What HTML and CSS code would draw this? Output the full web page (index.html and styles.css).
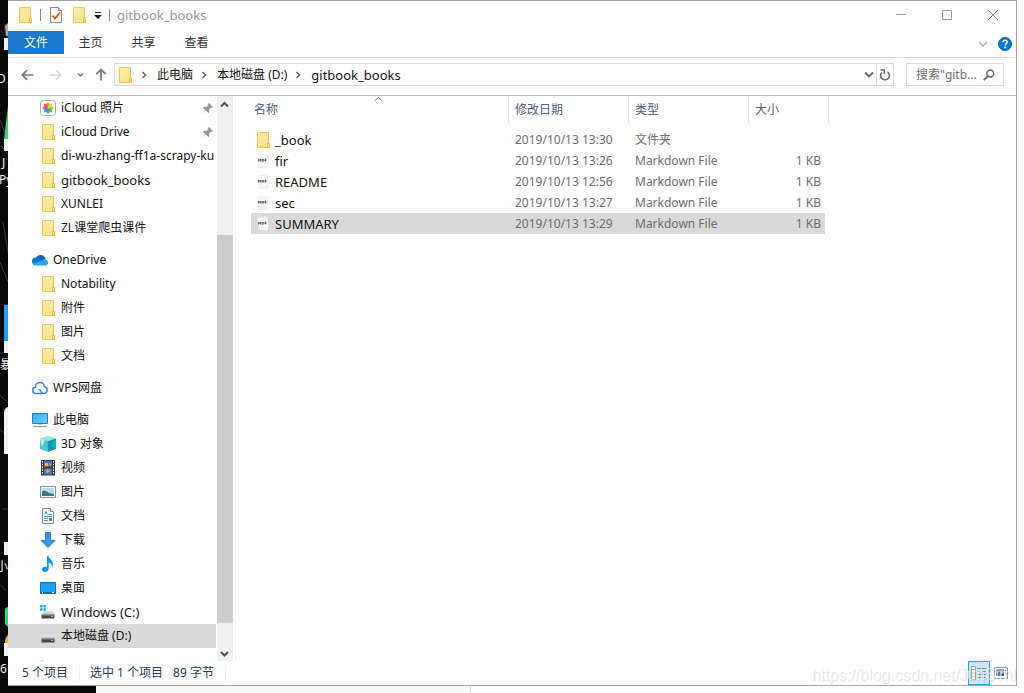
FILE: index.html
```html
<!DOCTYPE html>
<html lang="zh-CN">
<head>
<meta charset="utf-8">
<title>gitbook_books</title>
<link rel="stylesheet" href="styles.css">
</head>
<body>
<svg class="defs" width="0" height="0" aria-hidden="true">
  <defs>
    <linearGradient id="g-folder" x1="0" y1="0" x2="1" y2="1"><stop offset="0" stop-color="#ffedac"/><stop offset="1" stop-color="#ffe188"/></linearGradient>
    <linearGradient id="g-screen" x1="0" y1="0" x2="1" y2="1"><stop offset="0" stop-color="#33b1f5"/><stop offset="1" stop-color="#6ccbff"/></linearGradient>
    <linearGradient id="g-drive" x1="0" y1="0" x2="0" y2="1"><stop offset="0" stop-color="#e2e4e6"/><stop offset="1" stop-color="#c0c4c8"/></linearGradient>
    <symbol id="folder" viewBox="0 0 16 16"><path d="M2.500.5h11v11h1v4h-12z" fill="url(#g-folder)" stroke="#e9c758"/><path d="M12.500 15.500v-4.500h1.500l.5.5v4z" fill="#ffe080" stroke="#e4bf45"/></symbol>
    <symbol id="chev" viewBox="0 0 8 8"><path d="M2.500 1l3 3-3 3" fill="none" stroke="#666" stroke-width="1.500"/></symbol>
    <symbol id="pin" viewBox="0 0 12 12"><path d="M7 1l4 4-1 1-1-.3L7 7.700l.3 2.300-1 1L4 8.500.7 11.300 3.500 8 1 5.700l1-1 2.300.3L6.300 3 6 2z" fill="#8d9aa5"/></symbol>
    <symbol id="md" viewBox="0 0 16 16"><path d="M2.500 2l9-.8 1.500 1.800v11l-9.500.5z" fill="#f6f6f6" stroke="#e8e8e8" stroke-width=".6"/><path d="M3.500 8.500V6l1 1.500L5.600 6v2.500M7 6v2.500M8 6v2.500l1-1zM10.500 5.500v3M9.500 7h2.200" fill="none" stroke="#555" stroke-width=".9"/></symbol>
    <symbol id="drive" viewBox="0 0 16 16"><path d="M4 7h9l2 3.500H2z" fill="url(#g-drive)"/><path d="M1.500 10.500h13v4h-13z" fill="#45494c"/><path d="M1.500 10.500h13v1h-13z" fill="#999"/><path d="M11 12.500h2" stroke="#68e08a"/></symbol>
  </defs>
</svg>

<div class="screen">
  <svg class="desktop" viewBox="0 0 8 693" preserveAspectRatio="xMinYMin slice" aria-hidden="true">
    <rect width="8" height="693" fill="#080808"/>
    <path d="M5 24l3 4v10l-3-4zM1 30l3 6M0 120l8 20M1 145l7 10M3 222l5 30M0 262l8 20M0 395l8 8M0 430l8 5M2 509h6M1 585l5 6" stroke="#393939" stroke-width="1" fill="none"/>
    <path d="M5 26l3-3v13H6z" fill="#aaa"/>
    <path d="M8 106v34H4z" fill="#39d67b"/>
    <rect x="4" y="38" width="4" height="12" fill="#eee"/><rect x="4" y="139" width="4" height="12" fill="#eee"/>
    <rect x="4" y="305" width="4" height="36" fill="#1c9dff"/><rect x="4" y="341" width="4" height="12" fill="#eee"/>
    <path d="M8 407q-4 1-4 6v41h4z" fill="#f3f3f7"/>
    <rect x="4" y="542" width="4" height="13" fill="#eee"/>
    <path d="M8 607q-3 0-3 3v14l3 3z" fill="#1fdf75"/><path d="M8 635q-3 2-3 8h3z" fill="#ffad19"/><rect x="4" y="643" width="4" height="13" fill="#eee"/>
    <g class="desktop-text"><text x="-3" y="83">D</text><text x="2" y="167">J</text><text x="-1" y="184">Py</text><text x="0" y="369">暴</text><text x="-4" y="571">小</text><text x="0" y="673">6</text></g>
  </svg>

  <main class="window">
    <header class="titlebar">
      <svg class="ico" aria-hidden="true"><use href="#folder"/></svg>
      <span class="tsep"></span>
      <svg class="ico" viewBox="0 0 16 16" aria-hidden="true"><path d="M2.500.5h8l3 3v12h-11z" fill="#fafafa" stroke="#8b8b8b"/><path d="M10.500.5v3h3" fill="#ddd" stroke="#8b8b8b"/><path d="M4.500 8.500l2.500 3 5-6" fill="none" stroke="#e8571e" stroke-width="1.800"/></svg>
      <svg class="ico" aria-hidden="true"><use href="#folder"/></svg>
      <button class="plain" aria-label="自定义快速访问工具栏"><svg width="8" height="8" viewBox="0 0 8 8"><path d="M1 1.500h6" stroke="#222"/><path d="M0 4h8L4 8z" fill="#111"/></svg></button>
      <span class="tsep"></span>
      <h1 class="caption">gitbook_books</h1>
      <div class="winbtns">
        <button class="plain" aria-label="最小化"><svg width="12" height="12" viewBox="0 0 12 12"><path d="M1 5.500h10" stroke="#999"/></svg></button>
        <button class="plain" aria-label="最大化"><svg width="12" height="12" viewBox="0 0 12 12"><path d="M1.500 1.500h9v9h-9z" fill="none" stroke="#999"/></svg></button>
        <button class="plain" aria-label="关闭"><svg width="12" height="12" viewBox="0 0 12 12"><path d="M1 1l10 10M11 1L1 11" stroke="#8a8a8a"/></svg></button>
      </div>
    </header>

    <nav class="tabs">
      <button class="tab file">文件</button><button class="tab">主页</button><button class="tab">共享</button><button class="tab">查看</button>
      <div class="tabs-end">
        <button class="plain" aria-label="展开功能区"><svg width="10" height="8" viewBox="0 0 10 8"><path d="M1 2l4 4 4-4" fill="none" stroke="#aaa" stroke-width="1.300"/></svg></button>
        <button class="plain" aria-label="帮助"><svg width="14" height="14" viewBox="0 0 14 14"><circle cx="7" cy="7" r="6.500" fill="#0078d7" stroke="#0a5fa8"/><path d="M4.900 5.300c0-2.900 4.400-2.700 4.300-.2C9.200 6.500 7.200 6.600 7.200 8.500" fill="none" stroke="#fff" stroke-width="1.500"/><circle cx="7.200" cy="10.600" r="1" fill="#fff"/></svg></button>
      </div>
    </nav>

    <div class="addressrow">
      <div class="arrows">
        <button class="plain" aria-label="后退"><svg width="13" height="12" viewBox="0 0 13 12"><path d="M12.500 6H1.500M6 1.200L1.300 6 6 10.800" fill="none" stroke="#777" stroke-width="1.700"/></svg></button>
        <button class="plain" aria-label="前进"><svg width="13" height="12" viewBox="0 0 13 12"><path d="M.5 6h11M7 1.200L11.700 6 7 10.800" fill="none" stroke="#d8d8d8" stroke-width="1.700"/></svg></button>
        <button class="plain" aria-label="最近浏览的位置"><svg width="7" height="6" viewBox="0 0 7 6"><path d="M1 1.500L3.500 4 6 1.500" fill="none" stroke="#777" stroke-width="1.400"/></svg></button>
        <button class="plain" aria-label="上移"><svg width="12" height="13" viewBox="0 0 12 13"><path d="M6 12.500V1.500M1.200 6.200L6 1.400l4.800 4.800" fill="none" stroke="#777" stroke-width="1.700"/></svg></button>
      </div>
      <div class="address">
        <svg class="ico" aria-hidden="true"><use href="#folder"/></svg>
        <svg class="chev" aria-hidden="true"><use href="#chev"/></svg><a href="#">此电脑</a>
        <svg class="chev" aria-hidden="true"><use href="#chev"/></svg><a href="#">本地磁盘 (D:)</a>
        <svg class="chev" aria-hidden="true"><use href="#chev"/></svg><a href="#" class="latin">gitbook_books</a>
        <button class="plain drop" aria-label="历史"><svg width="10" height="8" viewBox="0 0 10 8"><path d="M1 1.500l4 4 4-4" fill="none" stroke="#666" stroke-width="1.900"/></svg></button>
        <button class="plain refresh" aria-label="刷新"><svg width="12" height="12" viewBox="0 0 12 12"><path d="M3 3.200a4.400 4.400 0 1 0 5.500-.4M1.500 1h3.800v4" fill="none" stroke="#666" stroke-width="1.500"/></svg></button>
      </div>
      <label class="search"><input type="text" placeholder='搜索"gitb...' aria-label="搜索"><svg width="12" height="12" viewBox="0 0 12 12" aria-hidden="true"><circle cx="7.300" cy="4.500" r="3.400" fill="none" stroke="#666" stroke-width="1.500"/><path d="M5 7L.8 11.200" stroke="#666" stroke-width="1.900"/></svg></label>
    </div>

    <div class="content">
      <nav class="tree">
        <ul>
          <li class="sub"><svg class="ico" viewBox="0 0 16 16"><rect x=".5" y=".5" width="15" height="15" rx="3" fill="#fff" stroke="#aaa"/><ellipse cx="8" cy="5" rx="1.700" ry="2.500" fill="#ff9418"/><ellipse cx="8" cy="11" rx="1.700" ry="2.500" fill="#2eacb4"/><ellipse cx="5" cy="8" rx="2.500" ry="1.700" fill="#b56bc6"/><ellipse cx="11" cy="8" rx="2.500" ry="1.700" fill="#9bca36"/><g transform="rotate(45 8 8)" opacity=".85"><ellipse cx="8" cy="5" rx="1.700" ry="2.500" fill="#e7d72c"/><ellipse cx="8" cy="11" rx="1.700" ry="2.500" fill="#527dd6"/><ellipse cx="5" cy="8" rx="2.500" ry="1.700" fill="#e84a31"/><ellipse cx="11" cy="8" rx="2.500" ry="1.700" fill="#4ab466"/></g></svg><span>iCloud 照片</span><svg class="pin"><use href="#pin"/></svg></li>
          <li class="sub"><svg class="ico"><use href="#folder"/></svg><span>iCloud Drive</span><svg class="pin"><use href="#pin"/></svg></li>
          <li class="sub"><svg class="ico"><use href="#folder"/></svg><span>di-wu-zhang-ff1a-scrapy-ku</span></li>
          <li class="sub"><svg class="ico"><use href="#folder"/></svg><span class="latin">gitbook_books</span></li>
          <li class="sub"><svg class="ico"><use href="#folder"/></svg><span>XUNLEI</span></li>
          <li class="sub"><svg class="ico"><use href="#folder"/></svg><span>ZL课堂爬虫课件</span></li>
        </ul>
        <ul>
          <li><svg class="ico" viewBox="0 0 16 16"><path d="M4 6a5 5 0 0 1 9.500 1L9 10z" fill="#0864b4"/><path d="M3.500 5.500C6 4.500 8 6 13 10l-10 3A3.800 3.800 0 0 1 3.500 5.500z" fill="#0978d4"/><path d="M10 8.500c3-3 7 0 6 3a2.500 2.500 0 0 1-2.500 2H3.500c-1.200 0-2-.5-2.700-1.500z" fill="#28a8ea"/></svg><span>OneDrive</span></li>
          <li class="sub"><svg class="ico"><use href="#folder"/></svg><span>Notability</span></li>
          <li class="sub"><svg class="ico"><use href="#folder"/></svg><span>附件</span></li>
          <li class="sub"><svg class="ico"><use href="#folder"/></svg><span>图片</span></li>
          <li class="sub"><svg class="ico"><use href="#folder"/></svg><span>文档</span></li>
        </ul>
        <ul>
          <li><svg class="ico" viewBox="0 0 16 16"><path d="M11 13.500H4a3.100 3.100 0 0 1-.4-6.200C3.200 1.500 11.500.800 12.300 6.500c4 .5 3.700 7-.5 7-1.500 0-1.800-.8-2.600-1.900C8.300 10.300 7.800 9.300 6.500 9.500" fill="none" stroke="#417ff0" stroke-width="1.500"/></svg><span>WPS网盘</span></li>
        </ul>
        <ul>
          <li><svg class="ico" viewBox="0 0 16 16"><path d="M.5 1.500h15v10H.5z" fill="url(#g-screen)" stroke="#2783b5"/><path d="M1 14.500h14" stroke="#7b95a6"/><path d="M6 12.500h4" stroke="#c5d3dc"/></svg><span>此电脑</span></li>
          <li class="sub"><svg class="ico" viewBox="0 0 16 16"><path d="M0 2.500L8 0l8 2.500L8 5z" fill="#8be4e6"/><path d="M0 2.500L8 5v11l-8-3z" fill="#49c6cb"/><path d="M16 2.500L8 5v11l8-3z" fill="#109ab0"/><path d="M0 2.500l5 1.600L2 11z" fill="#c3f1ef"/><path d="M16 3v10l-5-3z" fill="#0cb0d8"/></svg><span>3D 对象</span></li>
          <li class="sub"><svg class="ico" viewBox="0 0 16 16"><path d="M1 0h14v15.500H1z" fill="#3b3b3b"/><path d="M4 1h8v6H4zM4 8.500h8v6H4z" fill="#3e77ce"/><path d="M5 3h3v3H5zM9 3l2 1-1 2z" fill="#e4b63f"/><path d="M7 9l3 1-1 2-3 1z" fill="#f0ae37"/><path d="M4 6h8v1H4z" fill="#8a4a5c"/><path d="M2.500 1v14M13.500 1v14" stroke="#fff" stroke-dasharray="1.500 1.300"/></svg><span>视频</span></li>
          <li class="sub"><svg class="ico" viewBox="0 0 16 16"><path d="M.5 2.500h15v11H.5z" fill="#fff" stroke="#8c8c8c"/><path d="M2 4h12v8H2z" fill="#b4daf5"/><path d="M2 7q4-1 7 2l5 1v2H2z" fill="#42786f"/><path d="M2 11h12v1H2z" fill="#3474a9"/></svg><span>图片</span></li>
          <li class="sub"><svg class="ico" viewBox="0 0 16 16"><path d="M2.500.5h8l3 3v12h-11z" fill="#fff" stroke="#888"/><path d="M10.500.5v3h3" fill="#eee" stroke="#888"/><path d="M4.500 6.500L6 3.500l1.500 3M4 8.500h8M8 6.500h4M4 10.500h4M4 12.500h4" fill="none" stroke="#3c91c9"/><path d="M9 10h3v3H9z" fill="#497fae"/></svg><span>文档</span></li>
          <li class="sub"><svg class="ico" viewBox="0 0 16 16"><path d="M5.500.5h5v8h4.500L8 15.500 1 8.500h4.500z" fill="#3898e8" stroke="#2b7fcb"/></svg><span>下载</span></li>
          <li class="sub"><svg class="ico" viewBox="0 0 16 16"><path d="M7 0h1.500c.5 3.500 4.500 4 4.500 8 0 1.500-.5 2.500-1.200 3.500.3-3-1.300-4.500-3.100-5v6.300c0 4-6.700 4.200-6.700.8 0-2.500 2.800-3.300 5-2.500z" fill="#0f94f5"/></svg><span>音乐</span></li>
          <li class="sub"><svg class="ico" viewBox="0 0 16 16"><path d="M.5 2.500h15v11H.5z" fill="#1aa0f7" stroke="#0874b8"/><path d="M1 12.500h14" stroke="#086fb4"/><path d="M2 12.500h1M12 12.500h2" stroke="#fff"/></svg><span>桌面</span></li>
          <li class="sub"><svg class="ico" viewBox="0 0 16 16"><use href="#drive"/><path d="M0 1h2.600v2.500H0zM3.400 1H6v2.500H3.400zM0 4.300h2.600v2.500H0zM3.400 4.300H6v2.500H3.400z" fill="#12b2ec"/></svg><span class="latin">Windows (C:)</span></li>
          <li class="sub selected"><svg class="ico"><use href="#drive"/></svg><span>本地磁盘 (D:)</span></li>
        </ul>
        <ul class="more"><li><svg class="ico" viewBox="0 0 16 16"><path d="M6 2q4-3 8 0z" fill="#4d9bc0"/></svg></li></ul>
      </nav>
      <div class="scrollbar" aria-hidden="true">
        <svg viewBox="0 0 16 17"><path d="M4 10.500L7.500 7l3.500 3.500" fill="none" stroke="#505050" stroke-width="2"/></svg>
        <div class="track"><div class="thumb"></div></div>
        <svg viewBox="0 0 16 17"><path d="M4 8l3.500 3.500L11 8" fill="none" stroke="#505050" stroke-width="2"/></svg>
      </div>
      <section class="files">
        <table>
          <colgroup><col class="c-name"><col class="c-date"><col class="c-type"><col class="c-size"></colgroup>
          <thead><tr><th><svg class="sort" viewBox="0 0 9 6" aria-hidden="true"><path d="M.8 5l3.700-3.700L8.200 5" fill="none" stroke="#777"/></svg>名称</th><th>修改日期</th><th>类型</th><th>大小</th></tr></thead>
          <tbody>
            <tr><td><span class="name"><svg class="ico"><use href="#folder"/></svg>_book</span></td><td>2019/10/13 13:30</td><td>文件夹</td><td></td></tr>
            <tr><td><span class="name"><svg class="ico"><use href="#md"/></svg>fir</span></td><td>2019/10/13 13:26</td><td>Markdown File</td><td>1 KB</td></tr>
            <tr><td><span class="name"><svg class="ico"><use href="#md"/></svg>README</span></td><td>2019/10/13 12:56</td><td>Markdown File</td><td>1 KB</td></tr>
            <tr><td><span class="name"><svg class="ico"><use href="#md"/></svg>sec</span></td><td>2019/10/13 13:27</td><td>Markdown File</td><td>1 KB</td></tr>
            <tr class="selected"><td><span class="name"><svg class="ico"><use href="#md"/></svg>SUMMARY</span></td><td>2019/10/13 13:29</td><td>Markdown File</td><td>1 KB</td></tr>
          </tbody>
        </table>
      </section>
    </div>

    <footer class="status">
      <span class="count">5 个项目</span><span class="picked">选中 1 个项目</span><span class="bytes">89 字节</span>
      <div class="views">
        <button class="plain view on" aria-label="详细信息"><svg width="18" height="14" viewBox="0 0 18 14"><path d="M1.500.5h4v13h-4zM1 3.700h5M1 7h5M1 10.200h5" fill="#fff" stroke="#9aa2a8"/><path d="M7 2.500h4M12 2.500h4M7 5.500h4M12 5.500h4M7 8.500h4M12 8.500h4M7 11.500h4M12 11.500h4" stroke="#7d8890"/></svg></button>
        <button class="plain view" aria-label="大图标"><svg width="14" height="12" viewBox="0 0 14 12"><path d="M.5.5h13v11H.5z" fill="#fff" stroke="#999"/><path d="M2 2h8v7H2z" fill="#78aedb"/><path d="M2 6l3-1 5 2v2H2z" fill="#3f6d8a"/><path d="M11 3.500h1M11 6.500h1" stroke="#888"/></svg></button>
      </div>
    </footer>
  </main>
  <div class="below"><span></span><span></span><span></span></div>
</div>
<div class="watermark">https://blog.csdn.net/JunSiml</div>
</body>
</html>
```
FILE: styles.css
```css
* { box-sizing: border-box; }
body {
  margin: 0;
  overflow: hidden;
  background: #fff;
  color: #111;
  font: 12px/16px "Noto Sans", "Noto Sans CJK SC", sans-serif;
}
.defs { position: absolute; }
button, input { font: inherit; color: inherit; }
.plain { display: flex; align-items: center; justify-content: center; padding: 0; border: 0; background: none; }
.ico { flex: none; width: 16px; height: 16px; }
.latin { font-size: 13px; }

.screen {
  display: grid;
  grid-template: minmax(0, 1fr) 7px / 8px minmax(0, 1fr) 7px;
  height: 100vh;
}
.desktop { grid-row: 1 / 3; width: 8px; height: 100%; background: #080808; }
.desktop-text { font-size: 12px; fill: #eee; }
.below { grid-row: 2; grid-column: 2 / 4; display: grid; grid-template-columns: 88px 375px 1fr; }
.below span:nth-child(1) { background: #080808; }
.below span:nth-child(2) { background: #f9f9f9; border-right: 1px solid #ddd; }

.window {
  display: flex;
  flex-direction: column;
  border: solid #a3a3a3;
  border-width: 1px 1px 1px 0;
  background: #fff;
}

.titlebar { display: flex; align-items: center; height: 30px; padding: 0 0 2px 9px; gap: 7px; }
.tsep { width: 1px; height: 12px; background: #888; }
.caption { margin: 0; font-size: 13px; font-weight: 400; color: #999; }
.winbtns { display: flex; margin-left: auto; }
.winbtns button { width: 46px; height: 28px; }

.tabs { display: flex; align-items: flex-start; height: 27px; border-bottom: 1px solid #dadbdc; }
.tab { width: 53px; height: 23px; padding: 1px 0 0; border: 0; background: none; color: #333; }
.tab.file { width: 56px; background: #1979ca; color: #fff; }
.tabs-end { display: flex; align-items: center; gap: 10px; height: 26px; margin-left: auto; padding-right: 4px; }

.addressrow { display: flex; align-items: center; height: 38px; padding: 0 12px 4px 13px; border-bottom: 1px solid #b9b9b9; }
.arrows { display: flex; align-items: center; gap: 15px; width: 93px; }
.arrows button:nth-child(4) { margin-left: -4px; }
.address { display: flex; flex: 1; align-items: center; height: 23px; padding-left: 2px; border: 1px solid #d9d9d9; }
.address a { color: #111; text-decoration: none; }
.chev { width: 8px; height: 8px; margin: 0 9px 0 7px; }
.drop { width: 14px; height: 21px; margin-left: auto; }
.refresh { width: 17px; height: 21px; border-left: 1px solid #d9d9d9; }
.search { display: flex; align-items: center; width: 98px; height: 23px; margin-left: 12px; padding: 0 8px 0 9px; border: 1px solid #d9d9d9; }
.search input { flex: 1; min-width: 0; padding: 0; border: 0; outline: 0; background: none; }
.search input::placeholder { color: #6d6d6d; opacity: 1; }

.content { display: flex; flex: 1; min-height: 0; }
.tree { flex: none; width: 208px; overflow: hidden; }
.tree ul { margin: 0 0 8px; padding: 0; list-style: none; }
.tree li { display: flex; align-items: center; gap: 5px; height: 24px; padding-left: 24px; white-space: nowrap; }
.tree li.sub { padding-left: 32px; }
.tree .selected { background: #d9d9d9; }
.tree ul.more { margin: 0; }
.pin { width: 12px; height: 12px; margin: 0 2px 0 auto; }
.scrollbar { display: flex; flex-direction: column; width: 16px; margin-left: 1px; background: #f0f0f0; }
.scrollbar svg { width: 16px; height: 17px; }
.track { display: flex; flex: 1; flex-direction: column; justify-content: flex-end; padding-bottom: 21px; }
.thumb { height: 76%; background: #cdcdcd; }

.files { flex: 1; margin-left: 2px; padding-left: 15px; border-left: 1px solid #f3f3f3; }
table { width: 578px; border-collapse: separate; border-spacing: 0; table-layout: fixed; }
.c-name { width: 258px; }
.c-date, .c-type { width: 120px; }
.c-size { width: 80px; }
th { position: relative; height: 27px; padding: 0 0 0 6px; border-right: 1px solid #e5e5e5; color: #4c607a; font-weight: 400; text-align: left; }
th:first-child { padding-left: 3px; }
.sort { position: absolute; top: 0; left: 123px; width: 9px; height: 6px; }
tbody::before { display: block; height: 6px; content: ""; }
td { height: 21px; padding: 0 0 0 6px; color: #6d6d6d; }
td:first-child { padding-left: 4px; color: #111; }
td:last-child { padding-right: 4px; border-right: 4px solid transparent; background-clip: padding-box; text-align: right; }
.name { display: flex; align-items: center; gap: 4px; font-size: 13px; }
tr.selected td { background-color: #d9d9d9; }

.status { display: flex; align-items: center; height: 24px; padding-left: 14px; color: #1e395b; }
.count { padding-right: 11px; border-right: 1px solid #eee; }
.picked { padding-left: 10px; }
.bytes { padding: 0 11px 0 10px; border-right: 1px solid #eee; }
.views { display: flex; margin-left: auto; padding-right: 4px; }
.view { width: 22px; height: 24px; }
.view.on { border: 1px solid #26a0da; background: #cbe8f6; }

.watermark {
  position: absolute;
  right: 8px;
  bottom: 8px;
  color: rgba(255, 255, 255, .7);
  font: 16px/20px "Liberation Sans", sans-serif;
  text-shadow: 1px 1px 1px rgba(0, 0, 0, .14);
  pointer-events: none;
}
```
